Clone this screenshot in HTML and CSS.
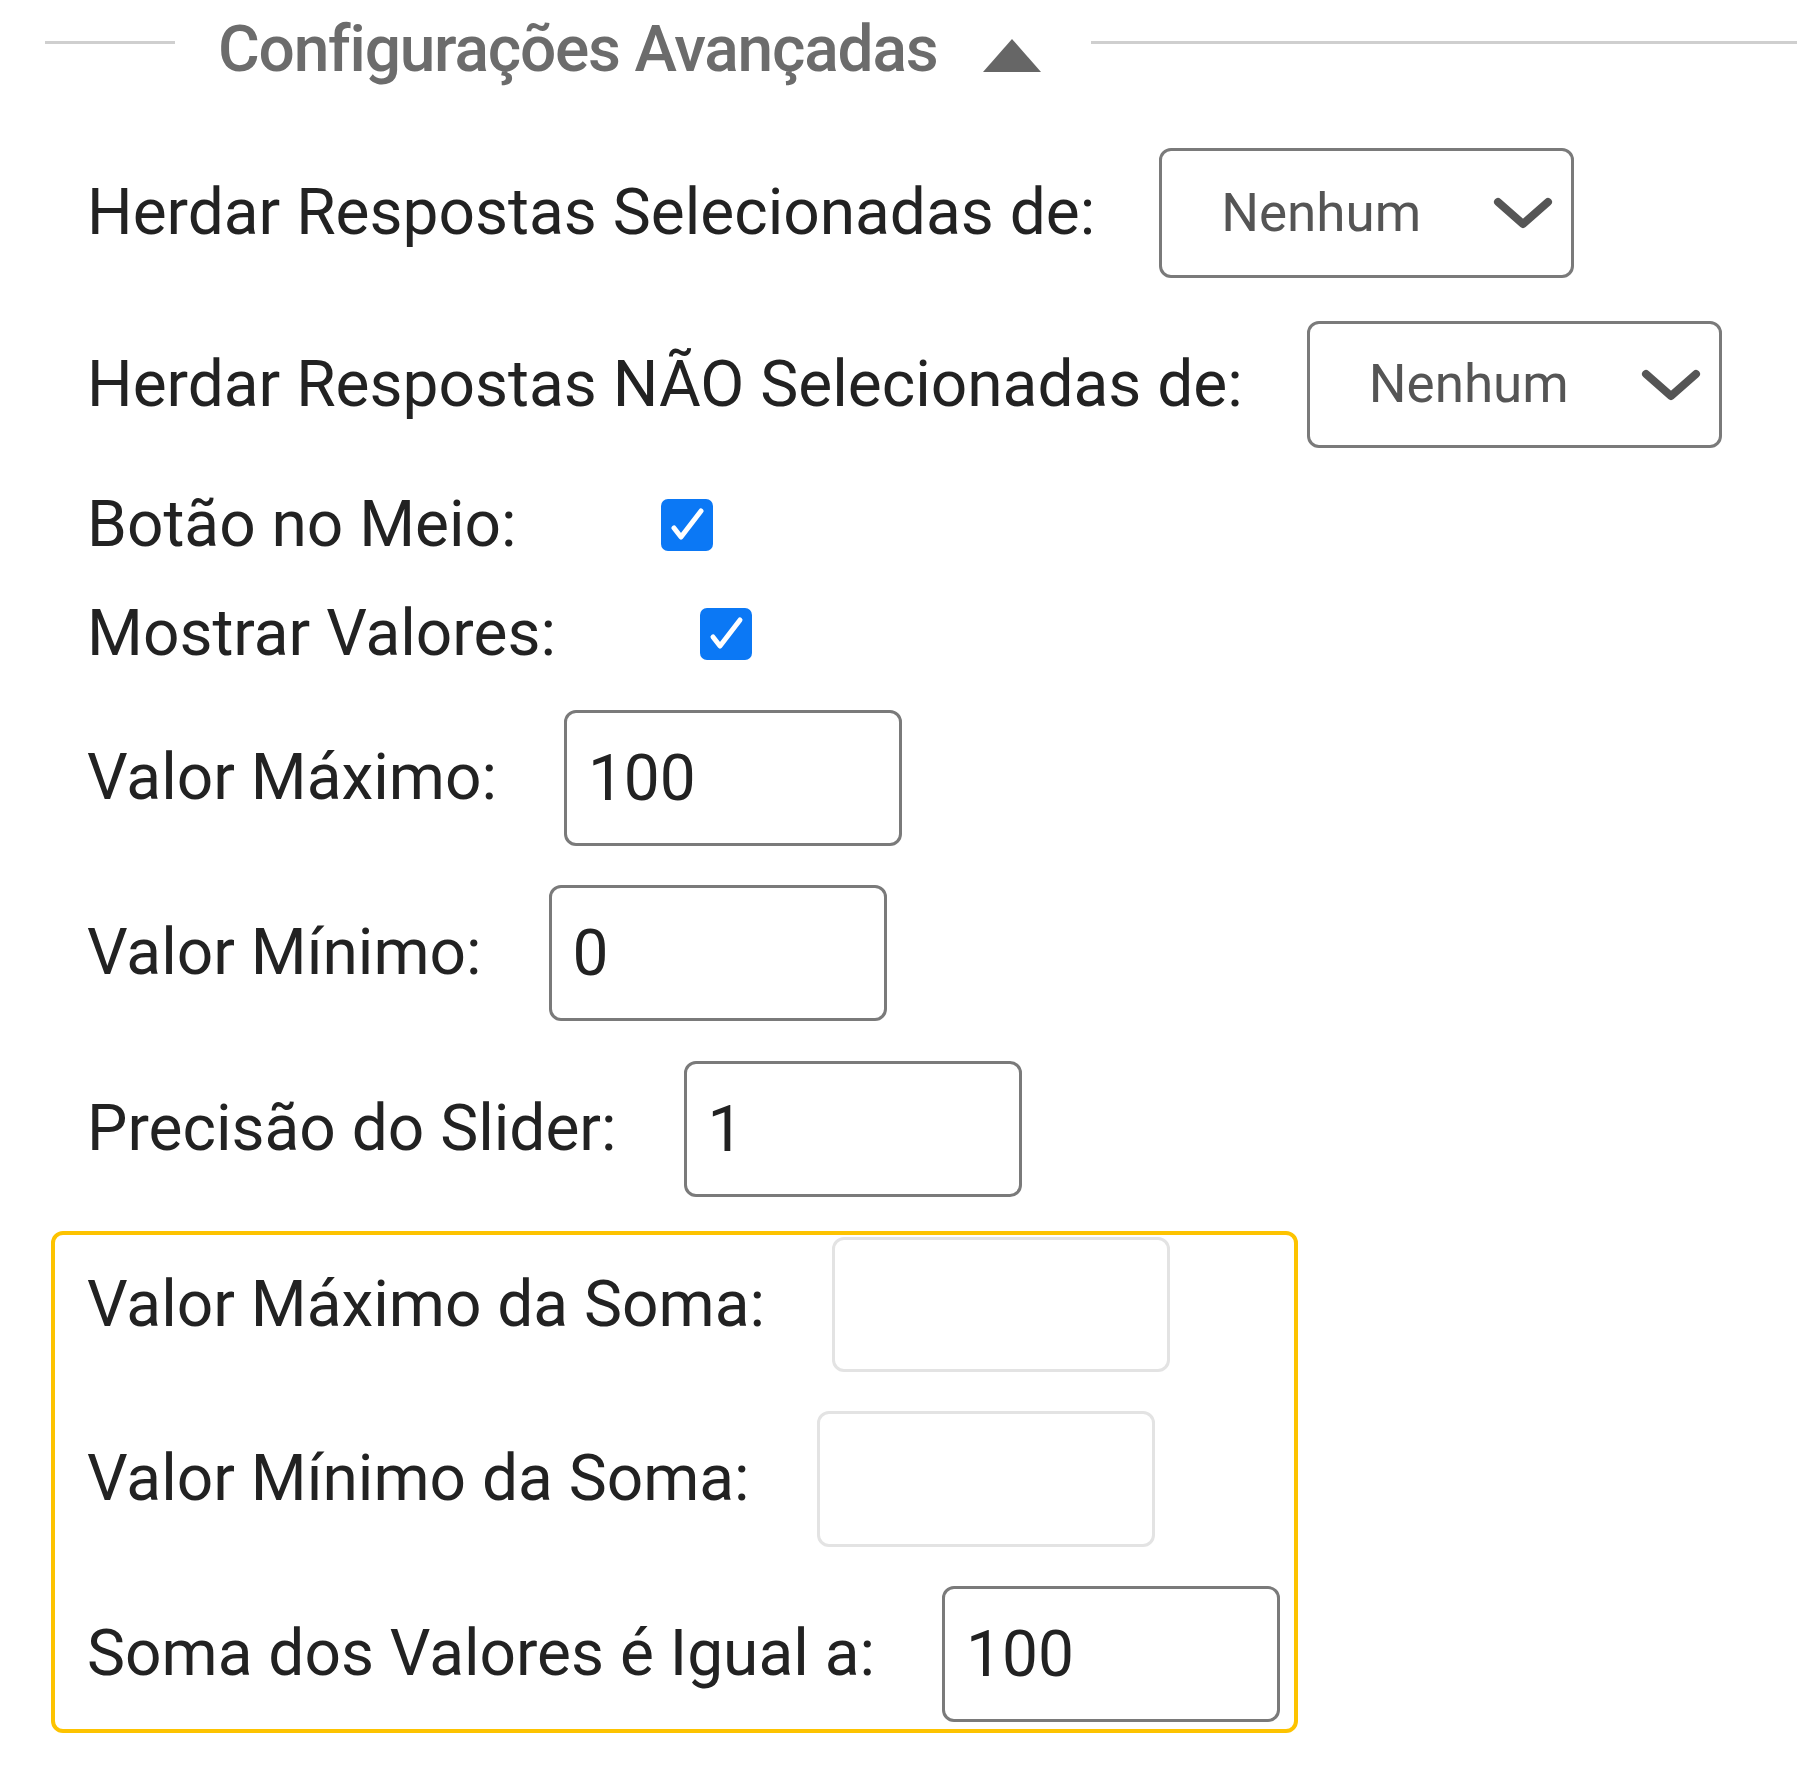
FILE: index.html
```html
<!DOCTYPE html>
<html lang="pt">
<head>
<meta charset="utf-8">
<title>Configurações Avançadas</title>
<link rel="stylesheet" href="styles.css">
</head>
<body>
<div class="panel">
  <div class="legend">
    <span class="line line-left"></span>
    <span class="legend-title">Configurações Avançadas</span>
    <svg class="caret" width="58" height="33" viewBox="0 0 58 33"><polygon points="0,33 29,0 58,33" fill="#666"/></svg>
    <span class="line line-right"></span>
  </div>

  <div class="row row-sel1">
    <span class="label">Herdar Respostas Selecionadas de:</span>
    <div class="select"><span class="select-text">Nenhum</span><svg class="chev" width="60" height="36" viewBox="0 0 60 36"><polyline points="5,7 30,29 55,7" fill="none" stroke="#555" stroke-width="8" stroke-linecap="round" stroke-linejoin="round"/></svg></div>
  </div>

  <div class="row row-sel2">
    <span class="label">Herdar Respostas NÃO Selecionadas de:</span>
    <div class="select"><span class="select-text">Nenhum</span><svg class="chev" width="60" height="36" viewBox="0 0 60 36"><polyline points="5,7 30,29 55,7" fill="none" stroke="#555" stroke-width="8" stroke-linecap="round" stroke-linejoin="round"/></svg></div>
  </div>

  <div class="row row-check row-check1">
    <span class="label">Botão no Meio:</span>
    <span class="check"><svg width="52" height="52" viewBox="0 0 52 52"><polyline points="13,29 20,38 40,12" fill="none" stroke="#fff" stroke-width="5" stroke-linecap="round" stroke-linejoin="round"/></svg></span>
  </div>

  <div class="row row-check row-check2">
    <span class="label">Mostrar Valores:</span>
    <span class="check"><svg width="52" height="52" viewBox="0 0 52 52"><polyline points="13,29 20,38 40,12" fill="none" stroke="#fff" stroke-width="5" stroke-linecap="round" stroke-linejoin="round"/></svg></span>
  </div>

  <div class="row row-input row-max">
    <span class="label">Valor Máximo:</span>
    <input class="field" type="text" value="100">
  </div>

  <div class="row row-input row-min">
    <span class="label">Valor Mínimo:</span>
    <input class="field" type="text" value="0">
  </div>

  <div class="row row-input row-prec">
    <span class="label">Precisão do Slider:</span>
    <input class="field" type="text" value="1">
  </div>

  <div class="sum-box">
    <div class="row row-input row-boxfirst">
      <span class="label">Valor Máximo da Soma:</span>
      <input class="field field-light" type="text" value="">
    </div>
    <div class="row row-input">
      <span class="label">Valor Mínimo da Soma:</span>
      <input class="field field-light" type="text" value="">
    </div>
    <div class="row row-input">
      <span class="label">Soma dos Valores é Igual a:</span>
      <input class="field" type="text" value="100">
    </div>
  </div>
</div>
</body>
</html>
```

FILE: styles.css
```css
* {
  box-sizing: border-box;
}

html, body {
  margin: 0;
  padding: 0;
  background: #fff;
}

body {
  font-family: Roboto, "Noto Sans", sans-serif;
  color: #222;
  width: 1797px;
  height: 1768px;
  overflow: hidden;
}

.panel {
  display: flex;
  flex-direction: column;
  padding-bottom: 30px;
}

.legend {
  display: flex;
  align-items: center;
  height: 84px;
}

.line {
  height: 3px;
  background: #cfcfcf;
}

.line-left {
  width: 130px;
  margin-left: 45px;
}

.line-right {
  flex: 1;
  margin-left: 50px;
}

.legend-title {
  margin-left: 43px;
  margin-top: 16px;
  font-size: 64px;
  font-weight: 500;
  letter-spacing: -1.2px;
  color: #6c6c6c;
  line-height: 1;
}

.caret {
  margin-left: 46px;
  margin-top: 27px;
  flex: none;
}

.row {
  display: flex;
  align-items: center;
  margin-left: 87px;
}

.label {
  font-size: 64px;
  line-height: 1;
  white-space: nowrap;
  color: #222;
}

.row-sel1 {
  height: 130px;
  margin-top: 64px;
}

.row-sel2 {
  height: 127px;
  margin-top: 43px;
}

.select {
  width: 415px;
  height: 100%;
  margin-left: 64px;
  border: 3px solid #7a7a7a;
  border-radius: 12px;
  display: flex;
  align-items: center;
  justify-content: space-between;
  padding-left: 59px;
  padding-right: 18px;
}

.select-text {
  font-size: 53px;
  color: #555;
  line-height: 1;
}

.chev {
  flex: none;
}

.row-check {
  height: 52px;
}

.row-check1 {
  margin-top: 51px;
}

.row-check2 {
  margin-top: 57px;
}

.check {
  width: 52px;
  height: 52px;
  margin-left: 144px;
  border-radius: 7px;
  background: #0b78f5;
  display: block;
  flex: none;
}

.check svg {
  display: block;
}

.row-input {
  height: 136px;
  margin-top: 39px;
}

.row-max {
  margin-top: 50px;
}

.row-prec {
  margin-top: 40px;
}

.field {
  width: 338px;
  height: 100%;
  margin: 0 0 0 67px;
  border: 3px solid #7a7a7a;
  border-radius: 12px;
  padding: 0 0 0 21px;
  font-family: Roboto, "Noto Sans", sans-serif;
  font-size: 64px;
  color: #222;
  background: #fff;
  outline: none;
}

.field-light {
  border-color: #e3e3e3;
}

.sum-box {
  width: 1247px;
  margin-left: 51px;
  margin-top: 34px;
  border: 4px solid #fdc300;
  border-radius: 12px;
  padding: 2px 0 7px 32px;
  display: flex;
  flex-direction: column;
}

.sum-box .row {
  margin-left: 0;
}

.sum-box .row-boxfirst {
  margin-top: 0;
  height: 135px;
}
```
